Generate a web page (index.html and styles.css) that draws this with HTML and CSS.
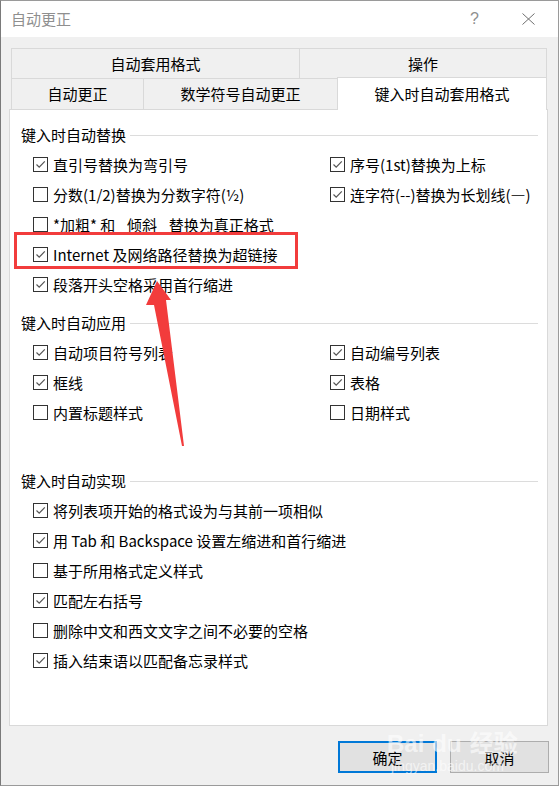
FILE: index.html
```html
<!DOCTYPE html>
<html lang="zh-CN">
<head>
  <meta charset="UTF-8">
  <title>自动更正</title>
  <link rel="stylesheet" href="styles.css">
</head>
<body>
  <div class="window">
    <div class="titlebar">
      <span class="title">自动更正</span>
      <span class="help">?</span>
      <svg class="close" width="13" height="12" viewBox="0 0 13 12">
        <path d="M0.5 0.5 L12.5 11.5 M12.5 0.5 L0.5 11.5" stroke="#6f6f6f" stroke-width="1" fill="none"/>
      </svg>
    </div>

    <div class="content">
      <div class="tabs">
        <div class="tab-row">
          <div class="tab w-format">自动套用格式</div>
          <div class="tab w-action">操作</div>
        </div>
        <div class="tab-row">
          <div class="tab w-auto">自动更正</div>
          <div class="tab w-math">数学符号自动更正</div>
          <div class="tab active w-typing">键入时自动套用格式</div>
        </div>
      </div>

      <div class="panel">
        <section class="group">
          <div class="group-title"><span>键入时自动替换</span></div>
          <div class="options two-col">
            <div class="opt on"><span class="box"></span>直引号替换为弯引号</div>
            <div class="opt on"><span class="box"></span>序号(1st)替换为上标</div>
            <div class="opt"><span class="box"></span>分数(1/2)替换为分数字符(½)</div>
            <div class="opt on"><span class="box"></span>连字符(--)替换为长划线(—)</div>
            <div class="opt full"><span class="box"></span>*加粗* 和 _倾斜_ 替换为真正格式</div>
            <div class="opt on full"><span class="box"></span>Internet 及网络路径替换为超链接</div>
            <div class="opt on full"><span class="box"></span>段落开头空格采用首行缩进</div>
          </div>
        </section>

        <section class="group g-apply">
          <div class="group-title"><span>键入时自动应用</span></div>
          <div class="options two-col">
            <div class="opt on"><span class="box"></span>自动项目符号列表</div>
            <div class="opt on"><span class="box"></span>自动编号列表</div>
            <div class="opt on"><span class="box"></span>框线</div>
            <div class="opt on"><span class="box"></span>表格</div>
            <div class="opt"><span class="box"></span>内置标题样式</div>
            <div class="opt"><span class="box"></span>日期样式</div>
          </div>
        </section>

        <section class="group g-do">
          <div class="group-title"><span>键入时自动实现</span></div>
          <div class="options">
            <div class="opt on"><span class="box"></span>将列表项开始的格式设为与其前一项相似</div>
            <div class="opt on"><span class="box"></span>用 Tab 和 Backspace 设置左缩进和首行缩进</div>
            <div class="opt"><span class="box"></span>基于所用格式定义样式</div>
            <div class="opt on"><span class="box"></span>匹配左右括号</div>
            <div class="opt"><span class="box"></span>删除中文和西文文字之间不必要的空格</div>
            <div class="opt on"><span class="box"></span>插入结束语以匹配备忘录样式</div>
          </div>
        </section>
      </div>

      <div class="buttons">
        <button class="btn default">确定</button>
        <button class="btn">取消</button>
      </div>
    </div>

    <!-- annotations drawn over the dialog -->
    <div class="highlight"></div>
    <svg class="arrow" width="559" height="786" viewBox="0 0 559 786">
      <polygon points="157,281 171,300 166,300 184,446 182,446 154,305 146,305" fill="#f23c3c"/>
    </svg>
    <div class="watermark">
      <div class="wm-logo">Bai<span class="paw">du</span>经验</div>
      <div class="wm-url">jingyan.baidu.com</div>
    </div>
  </div>
</body>
</html>
```

FILE: styles.css
```css
body {
  margin: 0;
  background: #f0f0f0;
  font-family: "Noto Sans CJK SC", "Noto Sans", sans-serif;
  font-size: 15px;
  color: #000;
}
.window {
  position: relative;
  width: 559px;
  height: 786px;
  box-sizing: border-box;
  border: 1px solid #9a9a9a;
  border-left-color: #7a7a7a;
  background: #f0f0f0;
  overflow: hidden;
}

/* title bar */
.titlebar {
  height: 36px;
  background: #fff;
  display: flex;
  align-items: center;
  padding-left: 10px;
}
.title {
  color: #8f8f8f;
  line-height: 20px;
}
.help {
  margin-left: auto;
  color: #8f8f8f;
  font-family: "Liberation Sans", sans-serif;
  font-size: 16px;
}
.close {
  margin-left: 43px;
  margin-right: 23px;
}

/* dialog content */
.content {
  padding: 11px 10px 0 8px;
}
.tabs {
  margin-left: 2px;
  width: 536px;
}
.tab-row {
  display: flex;
  height: 30px;
}
.tab-row + .tab-row {
  height: 31px;
}
.tab {
  box-sizing: border-box;
  border-top: 1px solid #d9d9d9;
  border-left: 1px solid #d9d9d9;
  text-align: center;
  line-height: 30px;
  background: #f0f0f0;
}
.tab:last-child {
  border-right: 1px solid #d9d9d9;
}
.w-format { width: 288px; }
.w-action { width: 248px; }
.w-auto { width: 132px; }
.w-math { width: 194px; }
.w-typing { width: 210px; }
.tab.active {
  position: relative;
  z-index: 1;
  background: #fff;
  margin-top: -1px;
  height: 33px;
  line-height: 32px;
}

.panel {
  box-sizing: border-box;
  width: 539px;
  height: 617px;
  border: 1px solid #d9d9d9;
  background: #fff;
  padding: 9px 9px 0 11px;
}
.group-title {
  display: flex;
  align-items: center;
  height: 30px;
}
.group-title::after {
  content: "";
  flex: 1;
  height: 1px;
  background: #dcdcdc;
  margin-left: 4px;
  margin-top: 2px;
}
.g-apply { margin-top: 8px; }
.g-do { margin-top: 38px; }

.options {
  padding-left: 12px;
}
.two-col {
  display: grid;
  grid-template-columns: 297px 1fr;
}
.two-col .full {
  grid-column: 1;
}
.opt {
  display: flex;
  align-items: center;
  height: 30px;
  white-space: nowrap;
}
.box {
  box-sizing: border-box;
  width: 15px;
  height: 15px;
  border: 1px solid #333;
  background: #fff;
  margin-right: 5px;
  flex: none;
}
.opt.on .box {
  background: #fff url("data:image/svg+xml,%3Csvg xmlns='http://www.w3.org/2000/svg' width='13' height='13'%3E%3Cpath d='M2.5 6.5 L5.2 9.2 L10.8 3.4' stroke='%23555' stroke-width='1.2' fill='none'/%3E%3C/svg%3E") no-repeat center;
}

/* buttons */
.buttons {
  display: flex;
  justify-content: flex-end;
  gap: 13px;
  margin-top: 15px;
  margin-right: -1px;
}
.btn {
  box-sizing: border-box;
  width: 99px;
  height: 32px;
  background: #e1e1e1;
  border: 1px solid #adadad;
  font-family: inherit;
  font-size: 15px;
  color: #000;
  padding: 0;
}
.btn.default {
  border: 2px solid #0078d7;
}

/* annotations */
.highlight {
  position: absolute;
  left: 13px;
  top: 231px;
  width: 284px;
  height: 37px;
  box-sizing: border-box;
  border: 3px solid #f23c3c;
}
.arrow {
  position: absolute;
  left: -1px;
  top: -1px;
  pointer-events: none;
}
.watermark {
  position: absolute;
  left: 386px;
  top: 728px;
  color: rgba(255, 255, 255, 0.6);
  font-family: "Liberation Sans", "Noto Sans CJK SC", sans-serif;
}
.wm-logo {
  font-size: 24px;
  font-weight: bold;
  line-height: 30px;
}
.paw {
  margin-left: 8px;
  margin-right: 8px;
}
.wm-url {
  font-size: 14px;
  line-height: 14px;
  margin-left: 4px;
}
```
